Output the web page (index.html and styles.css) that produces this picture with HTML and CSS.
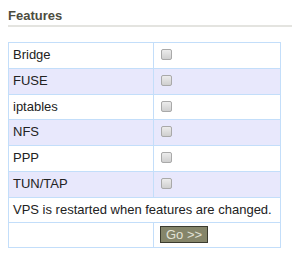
FILE: index.html
```html
<!DOCTYPE html>
<html lang="en">

<head>
  <meta charset="UTF-8">
  <title>Features</title>
  <link rel="stylesheet" href="styles.css">
</head>

<body>
  <h2 class="section-title">Features</h2>
  <form class="features-form">
    <table class="features">
      <colgroup>
        <col class="col-name">
        <col class="col-value">
      </colgroup>
      <tr>
        <td>Bridge</td>
        <td><input type="checkbox" name="bridge"></td>
      </tr>
      <tr class="alt">
        <td>FUSE</td>
        <td><input type="checkbox" name="fuse"></td>
      </tr>
      <tr>
        <td>iptables</td>
        <td><input type="checkbox" name="iptables"></td>
      </tr>
      <tr class="alt">
        <td>NFS</td>
        <td><input type="checkbox" name="nfs"></td>
      </tr>
      <tr>
        <td>PPP</td>
        <td><input type="checkbox" name="ppp"></td>
      </tr>
      <tr class="alt">
        <td>TUN/TAP</td>
        <td><input type="checkbox" name="tun"></td>
      </tr>
      <tr>
        <td class="note" colspan="2">VPS is restarted when features are changed.</td>
      </tr>
      <tr class="submit-row">
        <td></td>
        <td><button type="button" class="go">Go &gt;&gt;</button></td>
      </tr>
    </table>
  </form>
</body>

</html>
```

FILE: styles.css
```css
body {
  margin: 8px;
  font-family: "Liberation Sans", Arial, sans-serif;
  font-size: 13px;
  color: #222;
  background: #fff;
}

.section-title {
  margin: 0 0 15px 0;
  padding: 0 0 2px 0;
  font-size: 13px;
  line-height: 15px;
  font-weight: bold;
  color: #4d4d40;
  border-bottom: 2px solid #e4e4e0;
}

.features-form {
  margin: 0;
}

.features {
  width: 273px;
  table-layout: fixed;
  border-collapse: collapse;
}

.col-name {
  width: 145px;
}

.features td {
  border: 1px solid #c3defa;
  padding: 5px 4px;
  line-height: 14.75px;
  white-space: nowrap;
}

.features tr.alt td {
  background: #e8e8fc;
}

.features .submit-row td {
  padding: 3px 4px 4px 4px;
  height: 17px;
}

.features input[type="checkbox"] {
  appearance: none;
  -webkit-appearance: none;
  display: inline-block;
  box-sizing: border-box;
  width: 11px;
  height: 11px;
  margin: 0 0 0 3px;
  vertical-align: -1px;
  border: 1px solid #a9a9a9;
  border-radius: 2px;
  background: linear-gradient(to bottom, #ececec, #cfcfcf);
}

.go {
  display: block;
  box-sizing: border-box;
  height: 17px;
  font-family: "Liberation Sans", Arial, sans-serif;
  font-size: 13px;
  color: #e2e2d6;
  background: #85856a;
  border: 1px solid #3b3b2e;
  padding: 0 5px;
  margin: 0 0 0 2px;
  line-height: 15px;
}
```
